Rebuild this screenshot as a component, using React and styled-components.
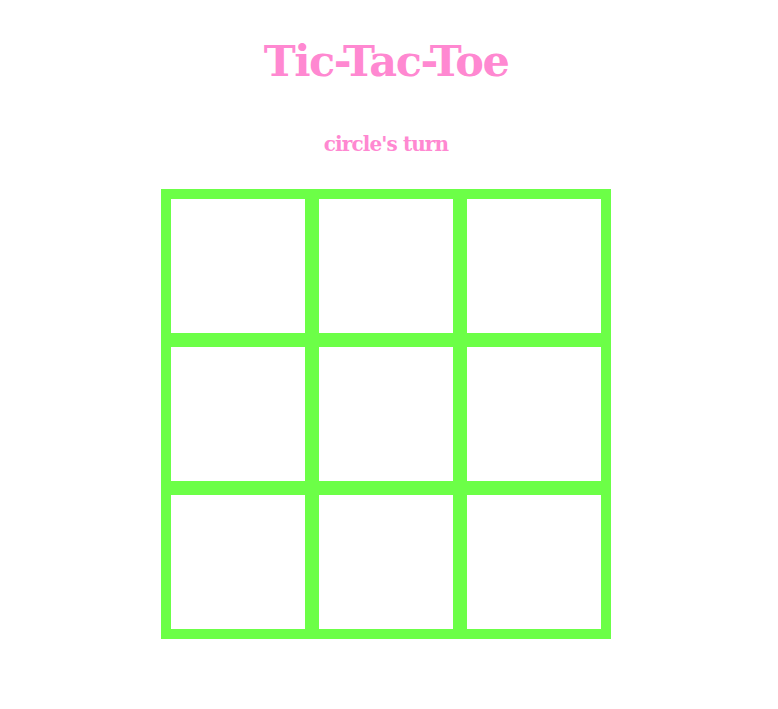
import React, { useState } from 'react';
import styled, { createGlobalStyle } from 'styled-components';

const GlobalStyle = createGlobalStyle`
  body {
    margin: 0;
    background: #ffffff;
    font-family: "DejaVu Serif", "Liberation Serif", serif;
  }
`;

const Page = styled.main`
  display: flex;
  flex-direction: column;
  align-items: center;
  padding: 36px 6px 0 0;
`;

const Title = styled.h1`
  margin: 0;
  color: #ff88d1;
  font-size: 43px;
  font-weight: 700;
  letter-spacing: -1.5px;
`;

const Turn = styled.h3`
  margin: 46px 0 0;
  color: #ff88d1;
  font-size: 20px;
  font-weight: 700;
  letter-spacing: -0.9px;
`;

const Board = styled.div`
  margin-top: 33px;
  display: grid;
  grid-template-columns: repeat(3, 148px);
  grid-template-rows: repeat(3, 148px);
  border: 3px solid #6cff47;
`;

const Cell = styled.div`
  box-sizing: border-box;
  border: 7px solid #6cff47;
  background: #ffffff;
`;

const App = () => {
  const [cells] = useState(Array(9).fill(''));
  return (
    <>
      <GlobalStyle />
      <Page>
        <Title>Tic-Tac-Toe</Title>
        <Turn>circle's turn</Turn>
        <Board>
          {cells.map((c, i) => (
            <Cell key={i}>{c}</Cell>
          ))}
        </Board>
      </Page>
    </>
  );
};

export default App;
